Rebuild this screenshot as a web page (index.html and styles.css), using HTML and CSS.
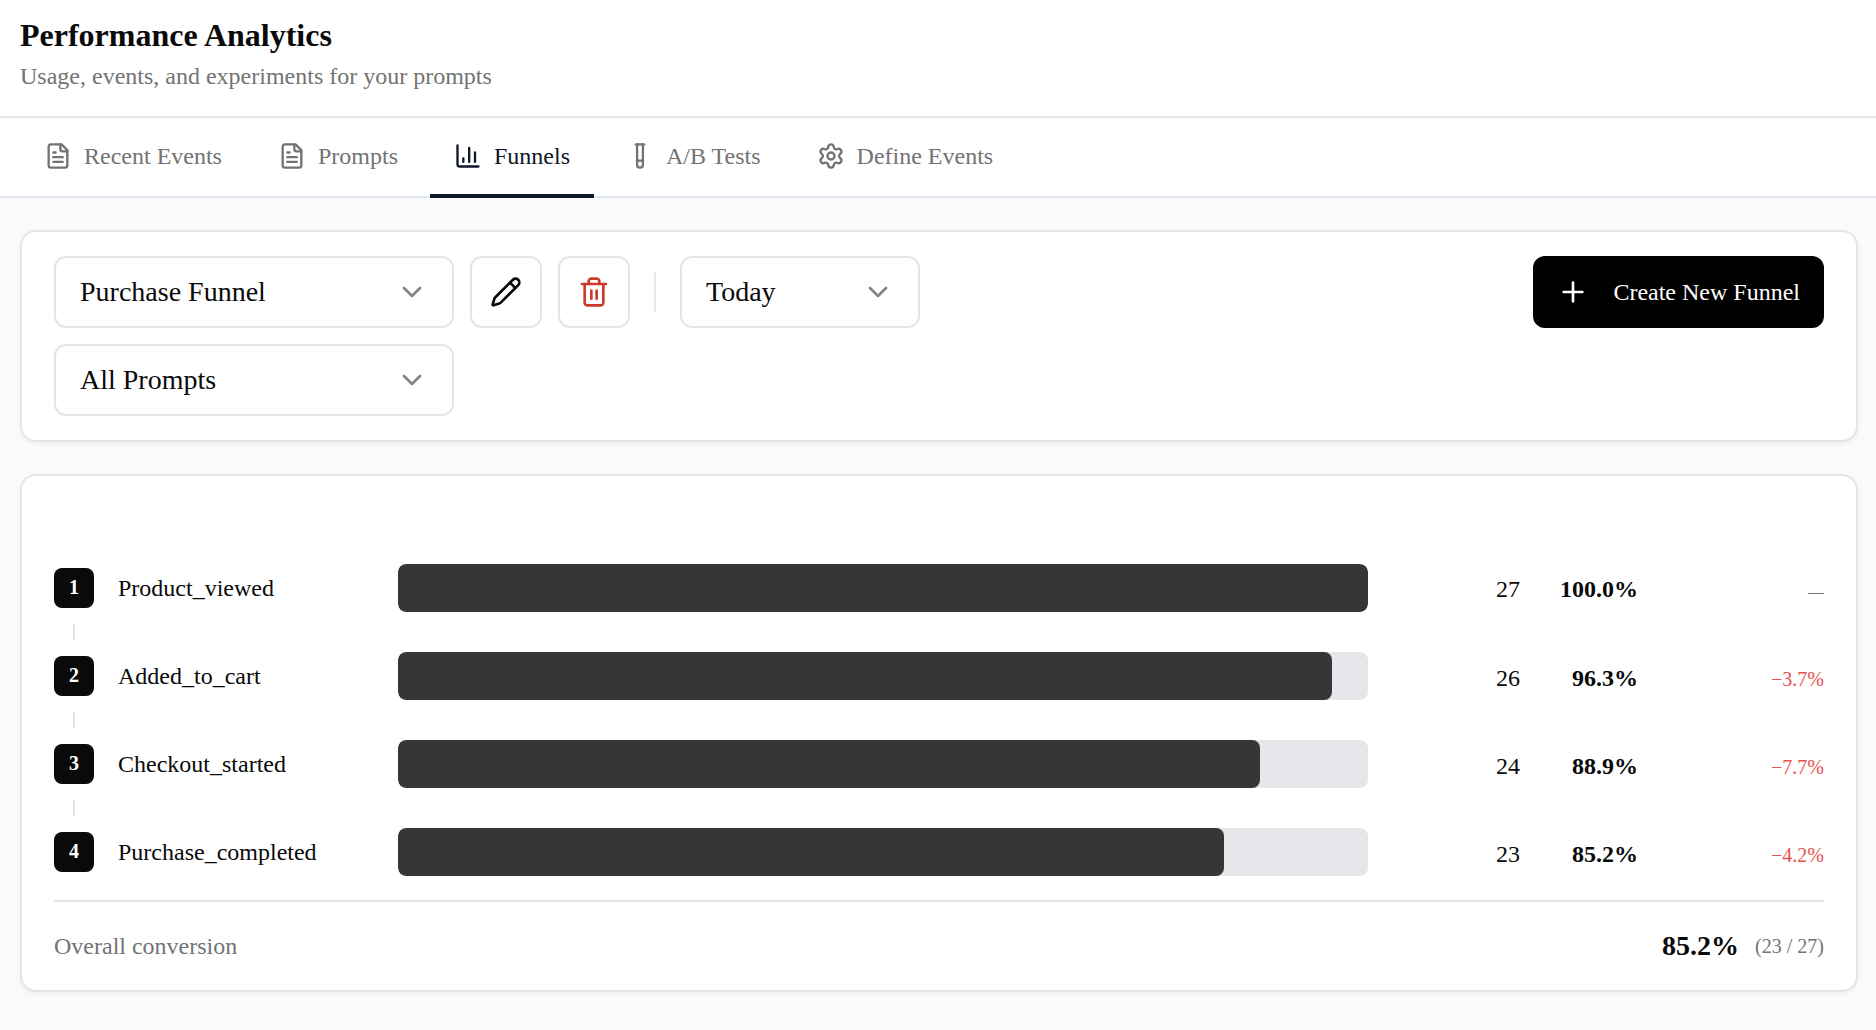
FILE: index.html
```html
<!DOCTYPE html>
<html lang="en">
<head>
	<meta charset="utf-8">
	<title>Performance Analytics</title>
	<link rel="stylesheet" href="styles.css">
</head>
<body>
	<header class="page-header">
		<h1>Performance Analytics</h1>
		<p>Usage, events, and experiments for your prompts</p>
	</header>

	<nav class="tabs">
		<a href="#events" class="tab">
			<svg class="icon" viewBox="0 0 24 24"><path d="M15 2H6a2 2 0 0 0-2 2v16a2 2 0 0 0 2 2h12a2 2 0 0 0 2-2V7Z"/><path d="M14 2v4a2 2 0 0 0 2 2h4"/><path d="M10 9H8"/><path d="M16 13H8"/><path d="M16 17H8"/></svg>
			Recent Events
		</a>
		<a href="#prompts" class="tab">
			<svg class="icon" viewBox="0 0 24 24"><path d="M15 2H6a2 2 0 0 0-2 2v16a2 2 0 0 0 2 2h12a2 2 0 0 0 2-2V7Z"/><path d="M14 2v4a2 2 0 0 0 2 2h4"/><path d="M10 9H8"/><path d="M16 13H8"/><path d="M16 17H8"/></svg>
			Prompts
		</a>
		<a href="#funnels" class="tab active" aria-current="page">
			<svg class="icon" viewBox="0 0 24 24"><path d="M3 3v16a2 2 0 0 0 2 2h16"/><path d="M18 17V9"/><path d="M13 17V5"/><path d="M8 17v-3"/></svg>
			Funnels
		</a>
		<a href="#tests" class="tab">
			<svg class="icon" viewBox="0 0 24 24"><path d="M14.500 2v17.500c0 1.400-1.100 2.500-2.500 2.500c-1.400 0-2.500-1.100-2.500-2.500V2"/><path d="M8.500 2h7"/><path d="M14.500 16h-5"/></svg>
			A/B Tests
		</a>
		<a href="#define" class="tab">
			<svg class="icon" viewBox="0 0 24 24"><path d="M9.671 4.136a2.340 2.340 0 0 1 4.659 0 2.340 2.340 0 0 0 3.319 1.915 2.340 2.340 0 0 1 2.330 4.033 2.340 2.340 0 0 0 0 3.831 2.340 2.340 0 0 1-2.330 4.033 2.340 2.340 0 0 0-3.319 1.915 2.340 2.340 0 0 1-4.659 0 2.340 2.340 0 0 0-3.320-1.915 2.340 2.340 0 0 1-2.330-4.033 2.340 2.340 0 0 0 0-3.831A2.340 2.340 0 0 1 6.350 6.051a2.340 2.340 0 0 0 3.319-1.915"/><circle cx="12" cy="12" r="3"/></svg>
			Define Events
		</a>
	</nav>

	<main>
		<section class="card toolbar">
			<div class="filters">
				<div class="filter-row">
					<div class="select">
						<select aria-label="Funnel"><option>Purchase Funnel</option></select>
						<svg class="icon" viewBox="0 0 24 24"><path d="m6 9 6 6 6-6"/></svg>
					</div>
					<button type="button" class="icon-button" aria-label="Edit funnel">
						<svg class="icon" viewBox="0 0 24 24"><path d="M21.174 6.812a1 1 0 0 0-3.986-3.987L3.842 16.174a2 2 0 0 0-.5.830l-1.321 4.352a.5.5 0 0 0 .623.622l4.353-1.320a2 2 0 0 0 .830-.497z"/><path d="m15 5 4 4"/></svg>
					</button>
					<button type="button" class="icon-button danger" aria-label="Delete funnel">
						<svg class="icon" viewBox="0 0 24 24"><path d="M3 6h18"/><path d="M19 6v14c0 1-1 2-2 2H7c-1 0-2-1-2-2V6"/><path d="M8 6V4c0-1 1-2 2-2h4c1 0 2 1 2 2v2"/><path d="M10 11v6"/><path d="M14 11v6"/></svg>
					</button>
					<span class="divider"></span>
					<div class="select small">
						<select aria-label="Period"><option>Today</option></select>
						<svg class="icon" viewBox="0 0 24 24"><path d="m6 9 6 6 6-6"/></svg>
					</div>
				</div>
				<div class="filter-row">
					<div class="select">
						<select aria-label="Prompts"><option>All Prompts</option></select>
						<svg class="icon" viewBox="0 0 24 24"><path d="m6 9 6 6 6-6"/></svg>
					</div>
				</div>
			</div>
			<button type="button" class="create-button">
				<svg class="icon" viewBox="0 0 24 24"><path d="M5 12h14"/><path d="M12 5v14"/></svg>
				Create New Funnel
			</button>
		</section>

		<section class="card funnel">
			<ol class="steps">
				<li class="step">
					<span class="badge">1</span>
					<span class="name">Product_viewed</span>
					<div class="track"><div class="bar" style="width: 100%"></div></div>
					<div class="stats">
						<span>27</span>
						<strong>100.0%</strong>
						<span class="drop none">—</span>
					</div>
				</li>
				<li class="step">
					<span class="badge">2</span>
					<span class="name">Added_to_cart</span>
					<div class="track"><div class="bar" style="width: 96.3%"></div></div>
					<div class="stats">
						<span>26</span>
						<strong>96.3%</strong>
						<span class="drop">−3.7%</span>
					</div>
				</li>
				<li class="step">
					<span class="badge">3</span>
					<span class="name">Checkout_started</span>
					<div class="track"><div class="bar" style="width: 88.9%"></div></div>
					<div class="stats">
						<span>24</span>
						<strong>88.9%</strong>
						<span class="drop">−7.7%</span>
					</div>
				</li>
				<li class="step">
					<span class="badge">4</span>
					<span class="name">Purchase_completed</span>
					<div class="track"><div class="bar" style="width: 85.2%"></div></div>
					<div class="stats">
						<span>23</span>
						<strong>85.2%</strong>
						<span class="drop">−4.2%</span>
					</div>
				</li>
			</ol>
			<footer class="overall">
				<span>Overall conversion</span>
				<div class="total">
					<strong>85.2%</strong>
					<span>(23 / 27)</span>
				</div>
			</footer>
		</section>
	</main>
</body>
</html>
```

FILE: styles.css
```css
* {
	box-sizing: border-box;
}

body {
	margin: 0;
	background-color: #f8fafc;
	color: #0a0a0a;
	font-family: "Liberation Serif", "Times New Roman", serif;
	font-size: 24px;
	line-height: 32px;
}

button, select {
	font: inherit;
	color: inherit;
}

.icon {
	flex: none;
	width: 32px;
	height: 32px;
	fill: none;
	stroke: currentColor;
	stroke-width: 2;
	stroke-linecap: round;
	stroke-linejoin: round;
}

.page-header {
	padding: 16px 20px 24px;
	background-color: white;
	border-bottom: 2px solid #e2e8f0;
}

.page-header h1 {
	margin: 0 0 6px;
	font-size: 32px;
	line-height: 38px;
}

.page-header p {
	margin: 0;
	color: #737373;
}

.tabs {
	display: flex;
	gap: 8px;
	padding: 0 20px;
	background-color: white;
	box-shadow: inset 0 -2px #e2e8f0;
}

.tab {
	display: flex;
	align-items: center;
	gap: 12px;
	padding: 22px 24px;
	border-bottom: 4px solid transparent;
	color: #737373;
	text-decoration: none;
}

.tab .icon {
	width: 28px;
	height: 28px;
}

.tab.active {
	color: #0f172a;
	border-bottom-color: #0f172a;
}

main {
	display: flex;
	flex-direction: column;
	gap: 32px;
	padding: 32px 18px 32px 20px;
}

.card {
	background-color: white;
	border: 2px solid #e5e5e5;
	border-radius: 16px;
	box-shadow: 0 2px 4px rgba(0, 0, 0, 0.05);
}

.toolbar {
	display: flex;
	align-items: flex-start;
	justify-content: space-between;
	padding: 24px 32px;
}

.filters {
	display: flex;
	flex-direction: column;
	gap: 16px;
}

.filter-row {
	display: flex;
	align-items: center;
	gap: 16px;
}

.select {
	position: relative;
	width: 400px;
}

.select.small {
	width: 240px;
}

.select select {
	display: block;
	appearance: none;
	width: 100%;
	height: 72px;
	padding: 0 64px 0 24px;
	border: 2px solid #e5e5e5;
	border-radius: 12px;
	background-color: white;
	font-size: 28px;
}

.select .icon {
	position: absolute;
	top: 20px;
	right: 26px;
	opacity: 0.5;
	pointer-events: none;
}

.icon-button {
	display: flex;
	align-items: center;
	justify-content: center;
	width: 72px;
	height: 72px;
	padding: 0;
	border: 2px solid #e5e5e5;
	border-radius: 12px;
	background-color: white;
}

.icon-button.danger {
	color: #cb3a31;
}

.divider {
	width: 2px;
	height: 40px;
	margin: 0 8px;
	background-color: #e5e7eb;
}

.create-button {
	display: flex;
	align-items: center;
	gap: 24px;
	height: 72px;
	padding: 0 24px;
	border: 0;
	border-radius: 12px;
	background-color: black;
	color: white;
}

.funnel {
	padding: 88px 32px 28px;
}

.steps {
	display: flex;
	flex-direction: column;
	gap: 40px;
	margin: 0;
	padding: 0 0 24px;
	list-style: none;
}

.step {
	display: grid;
	grid-template-columns: 40px 256px 1fr 432px;
	align-items: center;
	gap: 24px;
	height: 48px;
}

.badge {
	position: relative;
	height: 40px;
	border-radius: 8px;
	background-color: #0a0a0a;
	color: white;
	font-size: 20px;
	font-weight: bold;
	line-height: 38px;
	text-align: center;
}

/* connector down to the next step */
.step:not(:last-child) .badge::after {
	content: "";
	position: absolute;
	top: 56px;
	left: 19px;
	width: 2px;
	height: 16px;
	background-color: #e5e5e5;
}

.track {
	height: 48px;
	border-radius: 8px;
	background-color: #e5e7eb;
	overflow: hidden;
}

.bar {
	height: 100%;
	border-radius: 8px;
	background-color: #363636;
}

.stats {
	display: grid;
	grid-template-columns: 128px 118px 186px;
	align-items: baseline;
	padding-top: 4px;
	text-align: right;
}

.drop {
	color: #e5534b;
	font-size: 20px;
}

.drop.none {
	color: #737373;
	font-size: 16px;
}

.overall {
	display: flex;
	align-items: center;
	justify-content: space-between;
	padding-top: 28px;
	border-top: 2px solid #e5e5e5;
	color: #737373;
}

.total {
	display: flex;
	align-items: center;
	gap: 16px;
	font-size: 20px;
}

.total strong {
	color: #0a0a0a;
	font-size: 28px;
}
```
